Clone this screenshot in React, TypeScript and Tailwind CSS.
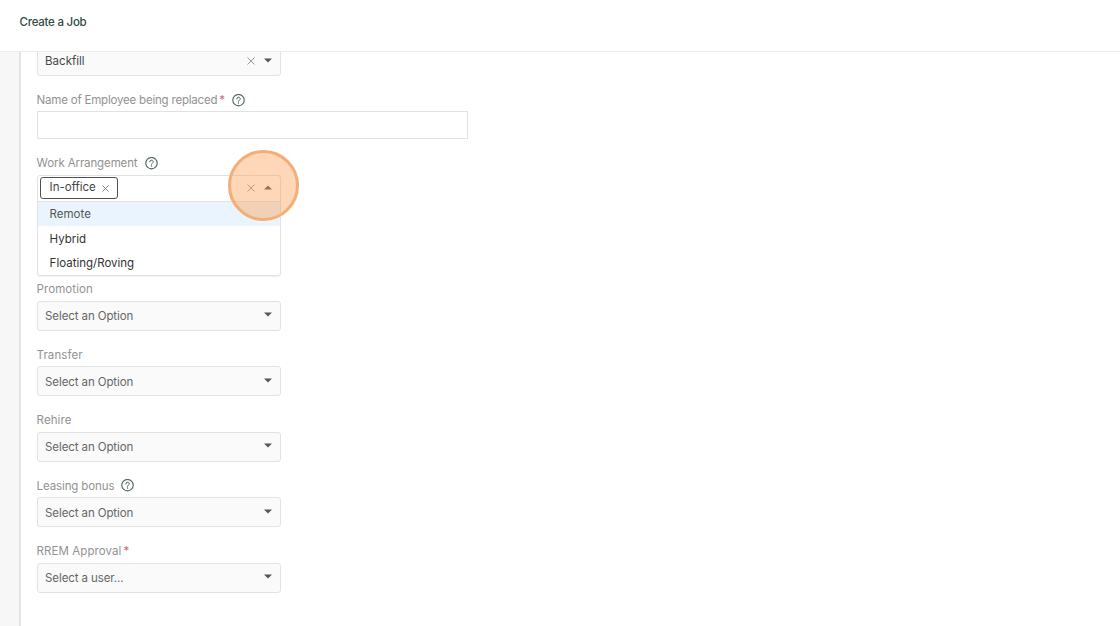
import type { ReactNode } from 'react';

type SelectProps = {
  text: string;
  clearable?: boolean;
};

const FIELDS = [
  { label: 'Promotion', text: 'Select an Option' },
  { label: 'Transfer', text: 'Select an Option' },
  { label: 'Rehire', text: 'Select an Option' },
  { label: 'Leasing bonus', text: 'Select an Option', help: true, tight: true },
  { label: 'RREM Approval', text: 'Select a user...', required: true },
];

type LabelProps = {
  children: ReactNode;
  required?: boolean;
  help?: boolean;
  tight?: boolean;
};

function HelpIcon() {
  return (
    <svg className="ml-[7px] h-[13px] w-[13px] text-[#4a635c]" viewBox="0 0 13 13" fill="none" stroke="currentColor">
      <circle cx="6.5" cy="6.2" r="5.7" strokeWidth="1.1" />
      <path d="M4.8 4.9a1.75 1.6 0 1 1 2.6 1.3c-.6.35-.9.6-.9 1.1" strokeWidth="1" strokeLinecap="round" />
      <circle cx="6.5" cy="9" r=".65" fill="currentColor" stroke="none" />
    </svg>
  );
}

function Cross({ className }: { className: string }) {
  return (
    <svg className={className} viewBox="0 0 8 8" fill="none" stroke="currentColor">
      <path d="M.5.5l7 7M7.5.5l-7 7" strokeWidth="1" />
    </svg>
  );
}

function Caret({ up }: { up?: boolean }) {
  return (
    <svg className="mb-[2px] h-[5px] w-2 text-[#555]" viewBox="0 0 8 5" fill="currentColor">
      {up ? <path d="M0 4.5h8L4 .5z" /> : <path d="M0 .5h8l-4 4z" />}
    </svg>
  );
}

function Label({ children, required, help, tight }: LabelProps) {
  return (
    <div className="flex h-5 items-center text-[11.5px] tracking-[0.08px] text-[#929292]">
      <span className={tight ? 'pt-[2px] tracking-[-0.12px]' : 'pt-[2px]'}>{children}</span>
      {required && <span className="ml-[2px] pt-[2px] text-[#cf6a6f]">*</span>}
      {help && <HelpIcon />}
    </div>
  );
}

function Select({ text, clearable }: SelectProps) {
  return (
    <div className="flex h-[30px] w-[244px] items-center rounded-[3px] border border-[#e2e2e2] bg-[#fafafa] pr-2 pl-[7.5px]">
      <span className={clearable ? 'flex-1 pt-[2px] text-[#484848]' : 'flex-1 pt-[2px] tracking-[-0.1px] text-[#666]'}>{text}</span>
      {clearable && <Cross className="mr-[9px] mb-px h-2 w-2 text-[#999]" />}
      <Caret />
    </div>
  );
}

export default function App() {
  return (
    <div className="flex h-[626px] w-[1120px] flex-col overflow-hidden bg-white font-['Inter','Liberation_Sans',sans-serif] text-[11.5px]">
      <header className="flex h-[52px] shrink-0 items-center border-b border-[#ececec] pb-[5px] pl-[19.5px] text-[11.5px] font-medium tracking-[-0.25px] text-[#2f4a41]">
        Create a Job
      </header>

      <div className="flex min-h-0 flex-1">
        <aside className="w-[21px] shrink-0 border-r-2 border-[#e2e5e5] bg-[#f7f7f7]" />

        <main className="flex-1 overflow-hidden pl-[15.6px]">
          <div className="-mt-1.5">
            <Select text="Backfill" clearable />
          </div>

          <div className="mt-3.5">
            <div className="flex h-5 items-center text-[11.5px] text-[#929292]">
              <span className="pt-[2px] tracking-[-0.2px]">Name of Employee being replaced</span>
              <span className="ml-[2px] pt-[2px] text-[#cf6a6f]">*</span>
              <HelpIcon />
            </div>
            <input className="mt-[1px] block h-7 w-[431px] border border-[#e2e2e2] bg-white px-2 outline-none" />
          </div>

          {/* Work arrangement, opened */}
          <div className="mt-3.5">
            <Label help tight>Work Arrangement</Label>
            <div className="relative mt-0.5 w-[244px] rounded-[3px] border border-[#e2e2e2] bg-white shadow-[0_1px_1px_rgba(0,0,0,0.06)]">
              <div className="flex h-[26px] items-center border-b border-[#e2e2e2] pr-2 pl-[2px]">
                <div className="mb-px flex h-[22px] w-[78px] items-center justify-between rounded-[3px] border border-[#505050] pr-2 pl-[9px] text-[#444]">
                  In-office
                  <Cross className="h-[7px] w-[7px] text-[#777]" />
                </div>
                <Cross className="mr-[9px] mb-[2px] ml-auto h-2 w-2 text-[#999]" />
                <Caret up />
              </div>
              <ul className="text-[#333]">
                <li className="flex h-6 items-center bg-[#e9f4fe] pl-3 pt-[2px] text-[#555]">Remote</li>
                <li className="flex h-[24.5px] items-center pl-3 pt-[2px]">Hybrid</li>
                <li className="flex h-[24.5px] items-center pl-3 pt-[2px]">Floating/Roving</li>
              </ul>
              {/* Click marker */}
              <div className="absolute -top-[26px] left-[190.4px] h-[71px] w-[71px] rounded-full border-[3px] border-[#f4ad74] bg-[#fb9a4c]/40" />
            </div>
          </div>

          <div className="mt-[2.7px] flex flex-col gap-[13.5px]">
            {FIELDS.map((field) => (
              <div key={field.label} className="flex flex-col gap-0.5">
                <Label required={field.required} help={field.help} tight={field.tight}>{field.label}</Label>
                <Select text={field.text} />
              </div>
            ))}
          </div>
        </main>
      </div>
    </div>
  );
}
